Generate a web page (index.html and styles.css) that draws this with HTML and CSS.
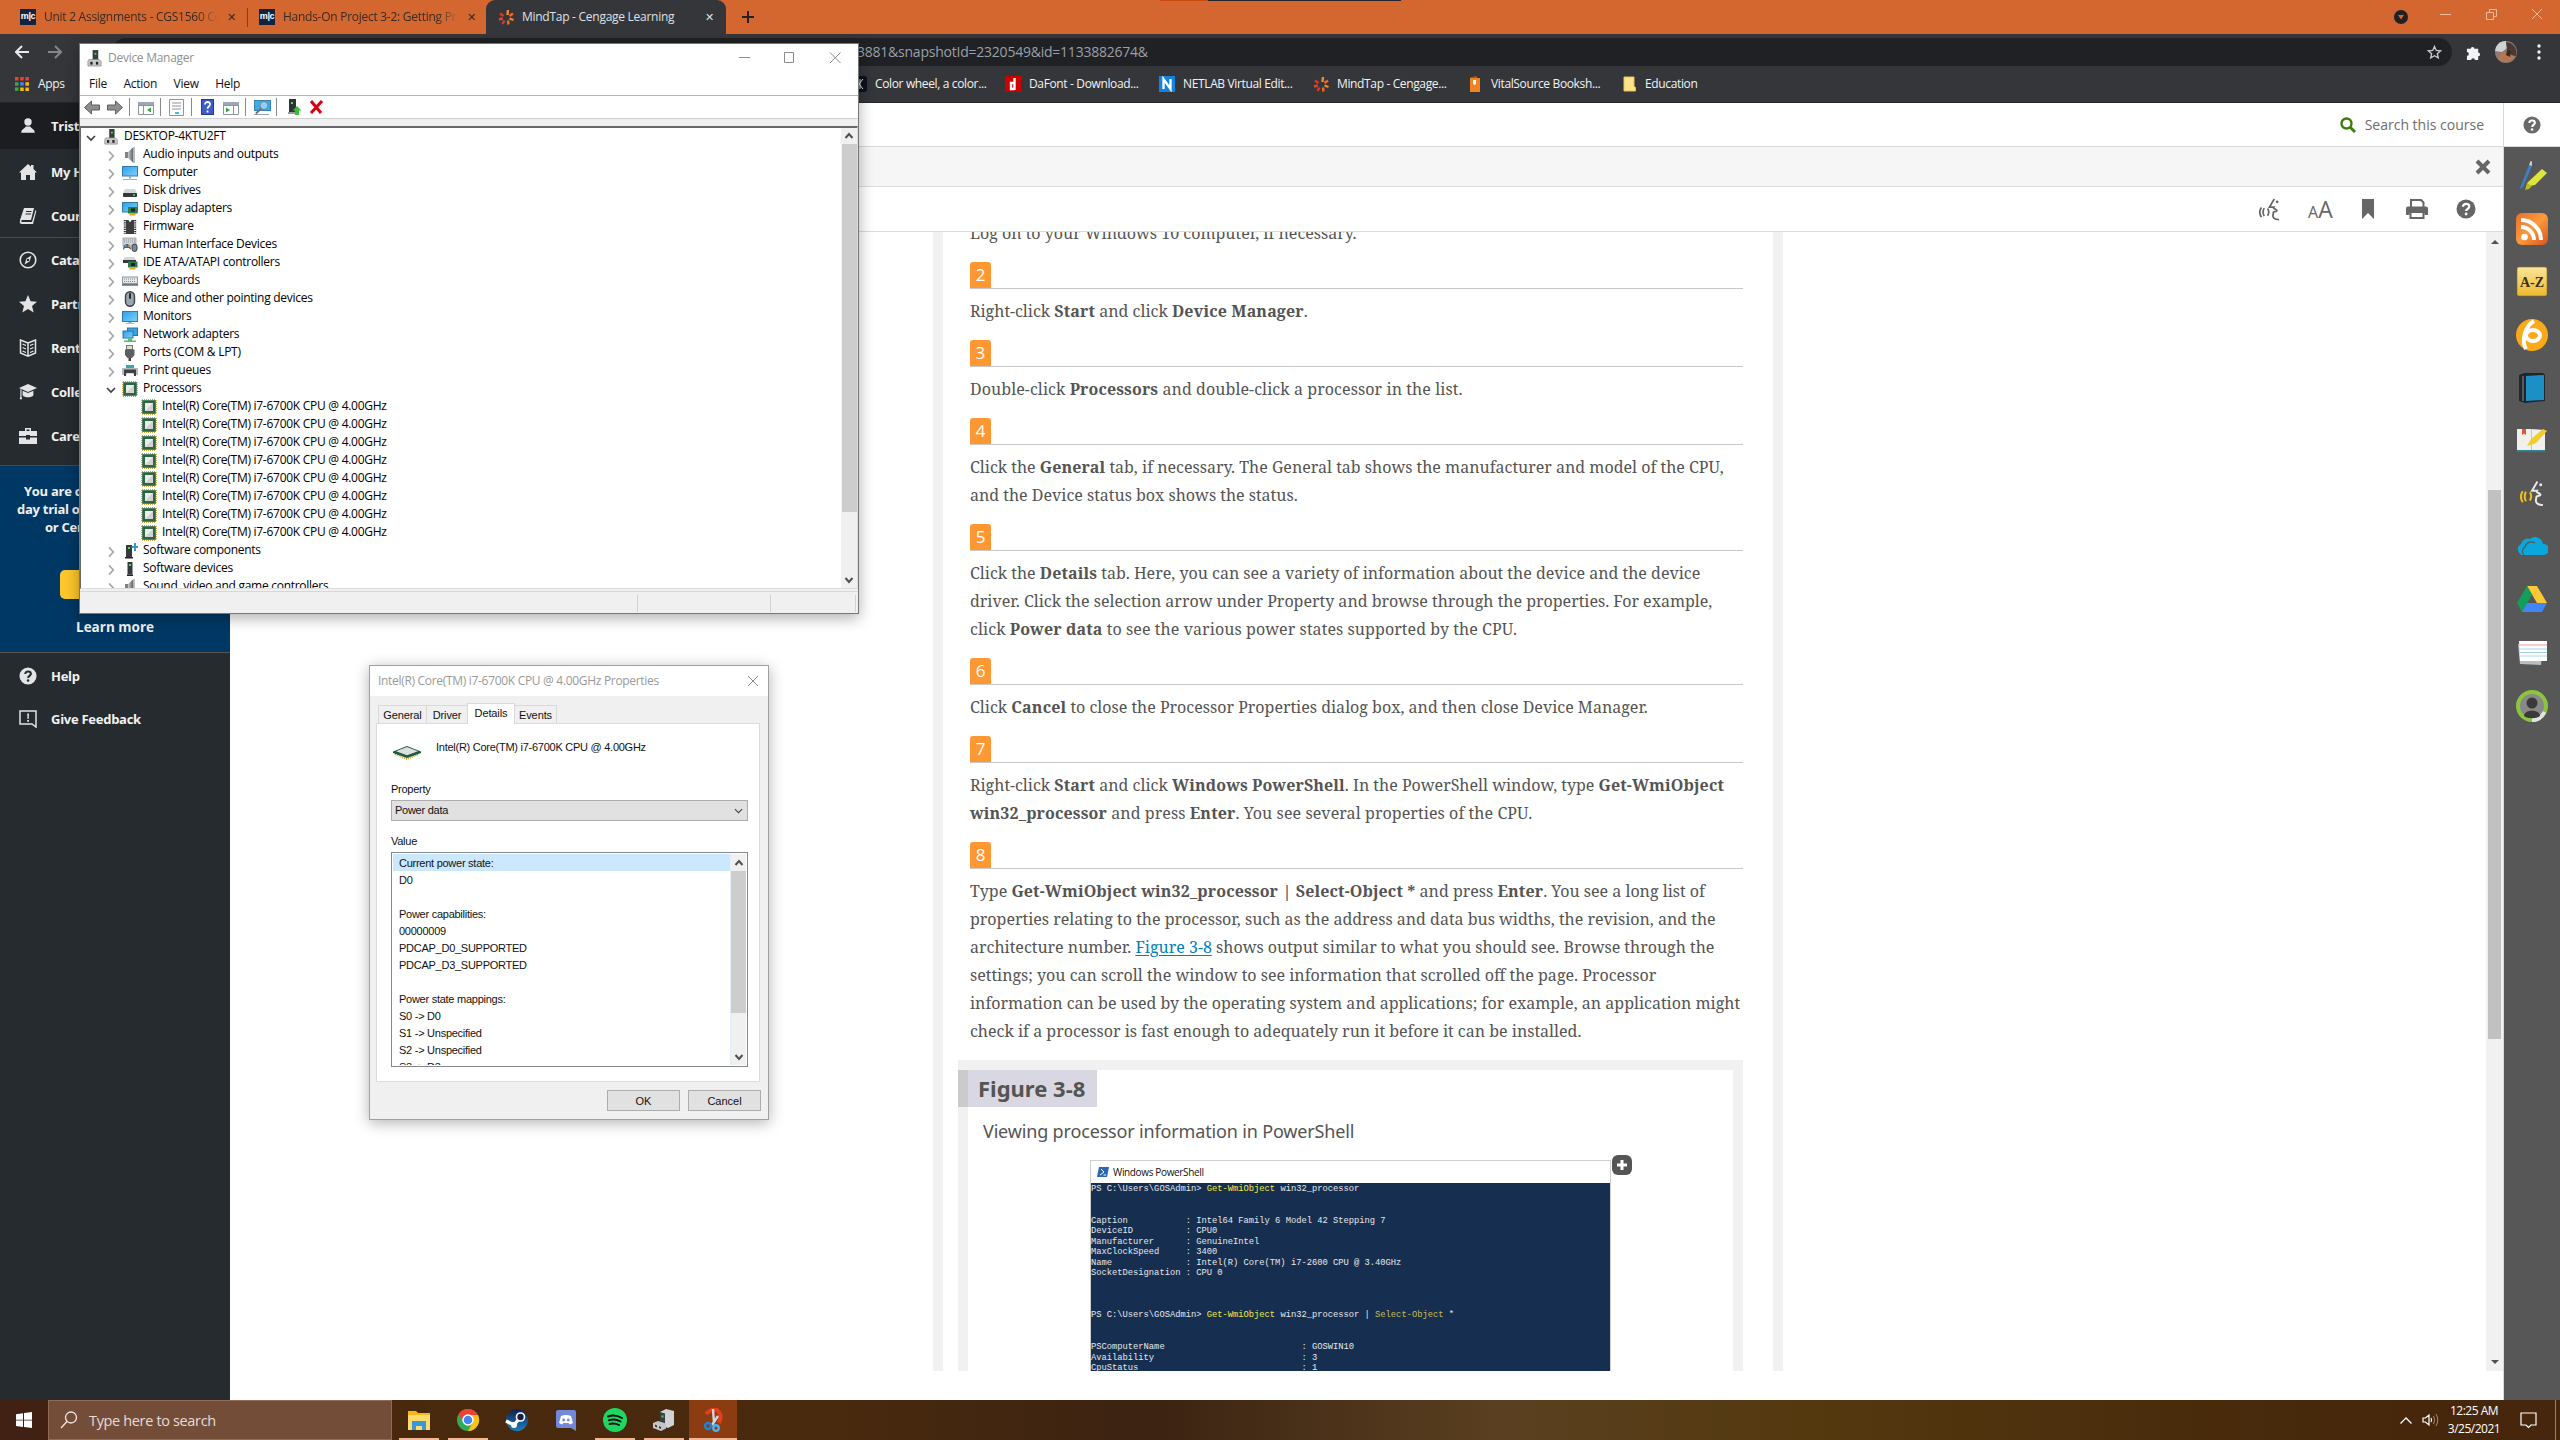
FILE: index.html
```html
<!DOCTYPE html>
<html lang="en">
<head>
<meta charset="utf-8">
<title>MindTap - Cengage Learning</title>
<link rel="stylesheet" href="styles.css">
</head>
<body>
<svg class="defs" aria-hidden="true">
  <defs>
    <linearGradient id="gScreen" x1="0" y1="0" x2="1" y2="1"><stop offset="0" stop-color="#2f9fe8"/><stop offset="1" stop-color="#7fd0ff"/></linearGradient>
    <linearGradient id="gGrey" x1="0" y1="0" x2="1" y2="0"><stop offset="0" stop-color="#c9ccd0"/><stop offset="1" stop-color="#5d6368"/></linearGradient>
    <linearGradient id="gRss" x1="0" y1="0" x2="1" y2="1"><stop offset="0" stop-color="#e8702a"/><stop offset=".5" stop-color="#fb9a3c"/><stop offset="1" stop-color="#d8521c"/></linearGradient>
    <linearGradient id="gAz" x1="0" y1="0" x2="0" y2="1"><stop offset="0" stop-color="#fbe59a"/><stop offset="1" stop-color="#ecb92c"/></linearGradient>
    <linearGradient id="gSteam" x1="0" y1="0" x2="0" y2="1"><stop offset="0" stop-color="#14204a"/><stop offset="1" stop-color="#1a7fc0"/></linearGradient>
    <symbol id="i-pc" viewBox="0 0 16 18"><rect x="6" y="0" width="6" height="11" fill="#3a3d40"/><rect x="8" y="3" width="2" height="2" fill="#3fe04c"/><path d="M2 10h11l2 2v5H1v-5z" fill="#c7c9cb" stroke="#85888b" stroke-width=".8"/><rect x="3.500" y="12.500" width="2.500" height="3" fill="#222"/><rect x="9.500" y="12.500" width="2.500" height="3" fill="#222"/></symbol>
    <symbol id="i-audio" viewBox="0 0 16 16"><path d="M3 5h3v6H3z" fill="#7c8286"/><path d="M6 5l5-4.500v15L6 11z" fill="url(#gGrey)"/><path d="M11.500 0h1v16h-1z" fill="#777"/></symbol>
    <symbol id="i-mon" viewBox="0 0 16 16"><rect x=".5" y="2.500" width="15" height="10" fill="url(#gScreen)" stroke="#2f7cae"/><path d="M6.500 13h3v1h-3zM4 14.200h8v.9H4z" fill="#8aa9bd"/></symbol>
    <symbol id="i-comp" viewBox="0 0 16 16"><rect x=".5" y="1.500" width="15" height="9.500" fill="url(#gScreen)" stroke="#2f7cae"/><path d="M7 11.500h2v2H7z" fill="#8aa9bd"/><path d="M1 14h14v1H1z" fill="#9fb4c3"/></symbol>
    <symbol id="i-disk" viewBox="0 0 16 16"><path d="M3 6h10l2 4H1z" fill="#d4d6d8"/><rect x="1" y="10" width="14" height="4" rx=".8" fill="#36393b"/><rect x="11" y="11.200" width="2" height="1.500" fill="#49e04f"/></symbol>
    <symbol id="i-disp" viewBox="0 0 16 16"><rect x=".5" y="1.500" width="15" height="9.500" fill="url(#gScreen)" stroke="#2f7cae"/><rect x="6" y="6" width="9.500" height="6.500" fill="#2f7b4c"/><rect x="9" y="7.500" width="4" height="3" fill="#123"/><path d="M7.500 12.500h6v2h-6z" fill="#e7a51d"/></symbol>
    <symbol id="i-chip" viewBox="0 0 16 16"><rect x="4" y="1" width="8" height="14" fill="#3c3d3f"/><path d="M2.800 1v14M13.200 1v14" stroke="#222" stroke-width="2" stroke-dasharray="1.200 1"/><circle cx="8" cy="1.500" r="1.300" fill="#fff"/></symbol>
    <symbol id="i-hid" viewBox="0 0 16 16"><rect x="1" y="1" width="13" height="8" fill="#d2d5d9" stroke="#8c9096" stroke-width=".7"/><path d="M2 3h11M2 5h11" stroke="#8c9096" stroke-dasharray="1 1"/><path d="M1 13c0-4 2-6 4-6s4 2 4 6l-2-2H3z" fill="#55606c"/><circle cx="4" cy="9" r="1" fill="#48a0e8"/><circle cx="7" cy="9" r="1" fill="#f0903c"/><rect x="10" y="7" width="5" height="7.500" rx="2.500" fill="#7d8894" stroke="#3a4048"/></symbol>
    <symbol id="i-ide" viewBox="0 0 16 16"><path d="M3 2h9l2 3H1z" fill="#d4d6d8"/><rect x="1" y="5" width="13" height="3" fill="#36393b"/><rect x="6" y="6.500" width="9.500" height="6" fill="#2f7b4c"/><rect x="9" y="8" width="4" height="3" fill="#123"/><path d="M7.500 12.500h6v2h-6z" fill="#e7a51d"/></symbol>
    <symbol id="i-kbd" viewBox="0 0 16 16"><rect x="0" y="3.500" width="16" height="9" fill="#8f959c"/><rect x="1" y="4.500" width="14" height="5.500" fill="#e6e9ec"/><path d="M2 6h12M2 8.500h12" stroke="#7d848b" stroke-dasharray="1 1"/><path d="M0 11.500h16v1H0z" fill="#565c63"/></symbol>
    <symbol id="i-mouse" viewBox="0 0 16 16"><rect x="3.500" y=".7" width="9" height="14.600" rx="4.500" fill="#9aa5b2" stroke="#3c4148" stroke-width="1.400"/><rect x="7" y="2" width="2" height="6" rx="1" fill="#2b2f35"/></symbol>
    <symbol id="i-net" viewBox="0 0 16 16"><rect x="5.500" y="1" width="10" height="7.500" fill="#39a3e8" stroke="#2c74a5"/><rect x="1" y="4" width="10" height="7" fill="url(#gScreen)" stroke="#2c74a5"/><path d="M6 11.500h4v2h4v1.500H2v-1.500h4z" fill="#4fc06a"/></symbol>
    <symbol id="i-port" viewBox="0 0 16 16"><rect x="4.500" y=".5" width="6" height="4" fill="#ddd" stroke="#777"/><path d="M3 4.500h9.500V10l-2.500 3H5.500L3 10z" fill="#5b5f63"/><path d="M6.500 13h2.500v3H6.500z" fill="#444"/></symbol>
    <symbol id="i-print" viewBox="0 0 16 16"><rect x="4" y="2" width="8" height="4" fill="#2ea0dc"/><path d="M5 3h3v2H5z" fill="#35b56a"/><rect x="0" y="5" width="16" height="7" fill="#b6b9bd"/><path d="M2 6.500h12V13h-2v-3H4v3H2z" fill="#3d4145"/><rect x="4.500" y="10.500" width="7" height="2.500" fill="#fff"/></symbol>
    <symbol id="i-cpu" viewBox="0 0 16 16"><path d="M1 .7h14M1 15.300h14M.7 1v14M15.300 1v14" stroke="#c9a748" stroke-width="1.200" stroke-dasharray="1 1"/><rect x="1.200" y="1.200" width="13.600" height="13.600" fill="#2d6547"/><rect x="4" y="4" width="8" height="8" fill="#d2d2d2"/><path d="M4 12V4h8z" fill="#ececec"/></symbol>
    <symbol id="i-swc" viewBox="0 0 16 16"><path d="M4 2h6v12H4z" fill="#36393b"/><path d="M3 14h8v1.500H3z" fill="#222"/><rect x="6" y="4" width="2" height="2" fill="#3fe04c"/><path d="M12 0h2v3h2v2h-2v3h-2V5H9.500V3H12z" fill="#3a96d8"/></symbol>
    <symbol id="i-swd" viewBox="0 0 16 16"><path d="M5.500 1h5v12.500h-5z" fill="#36393b"/><path d="M5 13.500h6V15H5z" fill="#222"/><rect x="7" y="3" width="2" height="2" fill="#3fe04c"/></symbol>
    <symbol id="i-ctree" viewBox="0 0 10 10"><path d="M3 .5L7.300 5 3 9.500" fill="none" stroke="#a6a6a6" stroke-width="1.700"/></symbol>
    <symbol id="i-ctreeo" viewBox="0 0 10 10"><path d="M1 3l4 4 4-4" fill="none" stroke="#404040" stroke-width="1.700"/></symbol>
    <symbol id="i-mt" viewBox="0 0 16 16"><g stroke-width="2.400"><path d="M10 1l-.5 5" stroke="#f58a2a"/><path d="M15 4.500l-3.500 2.500" stroke="#f06a25"/><path d="M15.500 11l-4-1.500" stroke="#f58a2a"/><path d="M10.500 15.500L10 11.500" stroke="#f06a25"/><path d="M4.500 15l2-3.500" stroke="#d93a2a"/><path d="M1 10.500l3.800-1" stroke="#e04a28"/><path d="M2 4.500l3.500 2.500" stroke="#d93a2a"/></g></symbol>
    <symbol id="i-q" viewBox="0 0 20 20"><circle cx="10" cy="10" r="9.500" fill="currentColor"/><path d="M7 7.800c0-4 6.200-3.600 6.200-.3 0 2.300-3.100 2.300-3.100 4.600" fill="none" stroke="var(--q,#fff)" stroke-width="2.300"/><circle cx="10.100" cy="15" r="1.400" fill="var(--q,#fff)"/></symbol>
    <symbol id="i-talk" viewBox="0 0 22 24"><path d="M16 1l-5 8.500h4.500c-1.500 2 4.500 2.500 3 4-1 1.500-4 0-3.500 2.500-1.500 4.500 1 6.500 6 6.500" fill="none" stroke="var(--face,#666)" stroke-width="1.800"/><circle cx="19" cy="4" r="1.400" fill="var(--face,#666)"/><path d="M9 11c1.500 2 1.500 5 0 7.500M5.500 10.500c-1.500 2.500-1.500 6 0 8.500M2.500 10c-2 3-2 7 0 10" fill="none" stroke="var(--wave,#666)" stroke-width="1.800"/></symbol>
  </defs>
</svg>

<div class="desktop">
  <header class="tabstrip">
    <div class="tab first"><span class="mc">m|c</span><span class="label">Unit 2 Assignments - CGS1560 Co</span><b class="x">✕</b></div>
    <div class="tab second"><span class="mc">m|c</span><span class="label">Hands-On Project 3-2: Getting Pr</span><b class="x">✕</b></div>
    <div class="tab active"><svg class="s16"><use href="#i-mt"/></svg><span class="label">MindTap - Cengage Learning</span><b class="x">✕</b></div>
    <svg class="plus" viewBox="0 0 12 12"><path d="M6 0v12M0 6h12" stroke="#202124" stroke-width="2"/></svg>
    <i class="strip-mark"></i>
    <div class="caption-buttons">
      <svg viewBox="0 0 14 14" width="14" height="14" class="drop"><circle cx="7" cy="7" r="7" fill="#202124"/><path d="M4 5h6l-3 4.500z" fill="#d3672f"/></svg>
      <svg viewBox="0 0 145 20" width="145" height="20"><g fill="none" stroke="#efb99b"><path d="M25 9.500h11"/><path d="M71.500 7.500h7v7h-7zM74.500 7V4.500h7v7H79"/><path d="M117 4l10 10M127 4l-10 10"/></g></svg>
    </div>
  </header>

  <div class="toolbar">
    <svg class="nav-arrows" viewBox="0 0 60 20"><g fill="none" stroke-width="2"><path d="M14 10H1M7 4l-6 6 6 6" stroke="#e8eaed"/><path d="M33 10h13M40 4l6 6-6 6" stroke="#84868a"/></g></svg>
    <div class="address"><span>3881&amp;snapshotId=2320549&amp;id=1133882674&amp;</span>
      <svg viewBox="0 0 16 16" width="15" height="15"><path d="M8 1.500l1.900 4.300 4.600.4-3.500 3.100 1.100 4.600L8 11.500l-4.100 2.400L5 9.300 1.500 6.200l4.600-.4z" fill="none" stroke="#c8cacd" stroke-width="1.400"/></svg></div>
    <svg class="puzzle" viewBox="0 0 16 16"><path d="M1 4h4a2 2 0 1 1 4 0h4v4a2 2 0 1 1 0 4v4H9.500a2 2 0 1 0-4 0H1v-4.500a2 2 0 1 0 0-4z" fill="#f1f3f4"/></svg>
    <svg class="avatar" viewBox="0 0 22 22"><circle cx="11" cy="11" r="11" fill="#8d7a72"/><path d="M1 6a11 11 0 0 1 10-6l1 7-5 4-7-1z" fill="#cfd3d8"/><path d="M11 1a11 11 0 0 1 10 14l-6-1-3-5z" fill="#4a3a35"/><path d="M3 18c2-6 6-9 9-7s6 3 7 6a11 11 0 0 1-15 2z" fill="#b27853"/><path d="M12 9l4 1-1 6-4-2z" fill="#3b2a25"/></svg>
    <svg class="dots" viewBox="0 0 4 16"><g fill="#f1f3f4"><circle cx="2" cy="2" r="1.700"/><circle cx="2" cy="8" r="1.700"/><circle cx="2" cy="14" r="1.700"/></g></svg>
  </div>

  <div class="bookmarks">
    <span class="bm apps"><svg viewBox="0 0 14 14" width="14" height="14"><g><path d="M0 0h3.500v3.500H0zM5.200 0h3.500v3.500H5.200zM10.400 0h3.500v3.500h-3.500z" fill="#ea4335"/><path d="M0 5.200h3.500v3.500H0z" fill="#34a853"/><path d="M5.200 5.200h3.500v3.500H5.200z" fill="#4285f4"/><path d="M10.400 5.200h3.500v3.500h-3.500z" fill="#fbbc04"/><path d="M0 10.400h3.500v3.500H0z" fill="#34a853"/><path d="M5.200 10.400h3.500v3.500H5.200zM10.400 10.400h3.500v3.500h-3.500z" fill="#fbbc04"/></g></svg>Apps</span>
    <span class="bm"><svg viewBox="0 0 16 16" width="16" height="16"><rect width="16" height="16" rx="3" fill="#0b1020"/><path d="M4 3l8 10M12 3L4 13M9 3v10" stroke="#ddd"/></svg>Color wheel, a color...</span>
    <span class="bm"><svg viewBox="0 0 16 16" width="16" height="16"><rect width="16" height="16" fill="#cd0000"/><path d="M9.500 2v12M9.500 7H6v6h3.500" stroke="#fff" stroke-width="2.400" fill="none"/></svg>DaFont - Download...</span>
    <span class="bm"><svg viewBox="0 0 16 16" width="16" height="16"><rect width="16" height="16" fill="#1283e0"/><path d="M4.500 13V3l7 10V3" fill="none" stroke="#fff" stroke-width="2.300"/></svg>NETLAB Virtual Edit...</span>
    <span class="bm"><svg class="s16"><use href="#i-mt"/></svg>MindTap - Cengage...</span>
    <span class="bm"><svg viewBox="0 0 16 16" width="16" height="16"><path d="M3 2l6-2 1 2h3v14H3z" fill="#f58220"/><path d="M3 2l6-2v2z" fill="#c8371c"/><path d="M6 4h3v4L7.500 9 6 8z" fill="#fff"/></svg>VitalSource Booksh...</span>
    <span class="bm"><svg viewBox="0 0 16 16" width="16" height="16"><path d="M3 1h10v9.500l1.500 1V15H3z" fill="#ffe38b" stroke="#e8c34e"/></svg>Education</span>
  </div>

  <main class="page">
    <nav class="side">
      <div class="side-item user"><svg viewBox="0 0 16 16"><circle cx="8" cy="4.500" r="3.300"/><path d="M2 14c0-3 3-3.500 4-5.500h4c1 2 4 2.500 4 5.500z"/></svg>Tristan</div>
      <div class="side-item"><svg viewBox="0 0 18 18"><path d="M9 1L0 9.500h2V17h5v-5h4v5h5V9.500h2L14.500 6V2H12v1.700z"/></svg>My Home</div>
      <div class="side-item courses"><svg viewBox="0 0 18 18"><path d="M5 1h10l-3 12H3c-1 0-1 2 0 2h10l3.500-12 .8 1L14 17H3c-3 0-2-3-2-4z"/><path d="M7 4.500h5.500M6.500 7H12" stroke="#252b2f"/></svg>Courses</div>
      <div class="side-item"><svg viewBox="0 0 18 18"><circle cx="9" cy="9" r="7.800" fill="none" stroke="#e4e4e4" stroke-width="1.600"/><path d="M12.500 4.500l-2 6-5 3 2-6z"/><circle cx="9" cy="9" r="1.200" fill="#252b2f"/></svg>Catalog</div>
      <div class="side-item"><svg viewBox="0 0 18 18"><path d="M9 0l2.600 6.200 6.400.5-5 4.200 1.700 6.600L9 14l-5.700 3.500L5 10.900 0 6.700l6.400-.5z"/></svg>Partner Offers</div>
      <div class="side-item"><svg viewBox="0 0 18 18"><path d="M9 4L1.500 1v13L9 17.200l7.500-3.200V1zM9 4v13" fill="none" stroke="#e4e4e4" stroke-width="1.500"/><path d="M3.500 5l3.500 1.500M3.500 8.500L7 10M3.500 12L7 13.500M14.500 5L11 6.500M14.500 8.500L11 10M14.500 12L11 13.500" stroke="#e4e4e4" stroke-width="1.300"/></svg>Rent</div>
      <div class="side-item"><svg viewBox="0 0 20 18"><path d="M0 4.500L10 0l10 4.500L10 9z"/><path d="M4 7.500l6 2.700 6-2.700v5c-2 3-10 3-12 0zM1.500 6h1.300v8l.7 3H.8l.7-3z"/></svg>College Success</div>
      <div class="side-item"><svg viewBox="0 0 18 18"><path d="M6 4V1h6v3h6v5h-7V8H7v1H0V4zm1.500 0h3V2.500h-3zM0 10.500h7v2h4v-2h7V17H0z"/></svg>Career Center</div>
      <section class="trial">
        <p class="l1">You are currently</p><p class="l2">day trial of Cen</p><p class="l3">or Cengage</p>
        <div class="trial-btn"></div>
        <a>Learn more</a>
      </section>
      <div class="side-item help"><svg viewBox="0 0 20 20" class="qd"><use href="#i-q"/></svg>Help</div>
      <div class="side-item"><svg viewBox="0 0 18 18"><path d="M1 1h16v16l-4-3H1z" fill="none" stroke="#e4e4e4" stroke-width="1.500"/><path d="M8.200 3.500h1.800l-.3 5.500H8.500zM8.200 10h1.800v1.700H8.200z"/></svg>Give Feedback</div>
    </nav>

    <div class="content">
      <div class="coursebar">
        <svg viewBox="0 0 16 16" width="16" height="16"><circle cx="6.500" cy="6.500" r="5" fill="none" stroke="#3a7f0e" stroke-width="2.400"/><path d="M10 10l5 5" stroke="#3a7f0e" stroke-width="2.800"/></svg>
        <span>Search this course</span>
        <div class="qbox"><svg width="18" height="18" viewBox="0 0 20 20"><use href="#i-q"/></svg></div>
      </div>
      <div class="below">
        <div class="reader">
          <div class="closebar"><svg viewBox="0 0 16 16" width="16" height="16"><path d="M2 2l12 12M14 2L2 14" stroke="#666" stroke-width="4"/></svg></div>
          <div class="tools">
            <svg width="21" height="23"><use href="#i-talk"/></svg>
            <span class="aa"><small>A</small>A</span>
            <svg class="mark" viewBox="0 0 12 20" width="12" height="20"><path d="M0 0h12v20l-6-6-6 6z" fill="#666"/></svg>
            <svg viewBox="0 0 22 20" width="22" height="20"><path d="M5 8V1h10l2.500 2.500V8" fill="none" stroke="#666" stroke-width="2"/><path d="M2 7.500h18q2 0 2 2V16h-3.500v-2h-15v2H0V9.500q0-2 2-2z" fill="#666"/><path d="M4.500 13.500v5.500h13v-5.500" fill="none" stroke="#666" stroke-width="2"/></svg>
            <svg viewBox="0 0 20 20" width="20" height="20"><use href="#i-q"/></svg>
          </div>
          <div class="scrollpane">
            <article class="article">
              <div class="step"><b class="num">1</b><p>Log on to your Windows 10 computer, if necessary.</p></div>
              <div class="step"><b class="num">2</b><p>Right-click <b>Start</b> and click <b>Device Manager</b>.</p></div>
              <div class="step loose"><b class="num">3</b><p>Double-click <b>Processors</b> and double-click a processor in the list.</p></div>
              <div class="step"><b class="num">4</b><p>Click the <b>General</b> tab, if necessary. The General tab shows the manufacturer and model of the CPU,<br>and the Device status box shows the status.</p></div>
              <div class="step"><b class="num">5</b><p>Click the <b>Details</b> tab. Here, you can see a variety of information about the device and the device<br>driver. Click the selection arrow under Property and browse through the properties. For example,<br><span class="loose">click <b>Power data</b> to see the various power states supported by the CPU.</span></p></div>
              <div class="step"><b class="num">6</b><p>Click <b>Cancel</b> to close the Processor Properties dialog box, and then close Device Manager.</p></div>
              <div class="step"><b class="num">7</b><p>Right-click <b>Start</b> and click <b>Windows PowerShell</b>. In the PowerShell window, type <b>Get-WmiObject<br>win32_processor</b><span class="loose"> and press <b>Enter</b>. You see several properties of the CPU.</span></p></div>
              <div class="step"><b class="num">8</b><p>Type <b>Get-WmiObject win32_processor | Select-Object *</b> and press <b>Enter</b>. You see a long list of<br>properties relating to the processor, such as the address and data bus widths, the revision, and the<br>architecture number. <a>Figure 3-8</a> shows output similar to what you should see. Browse through the<br>settings; you can scroll the window to see information that scrolled off the page. Processor<br>information can be used by the operating system and applications; for example, an application might<br>check if a processor is fast enough to adequately run it before it can be installed.</p></div>
              <figure class="figure">
                <h3>Figure 3-8</h3>
                <figcaption>Viewing processor information in PowerShell</figcaption>
                <div class="shot">
                  <div class="ps">
                    <div class="ps-title"><svg viewBox="0 0 12 10" width="12" height="10"><path d="M2 0h10l-2 10H0z" fill="#2a66b4"/><path d="M4 2l3 3-4 3M6.500 8H9" stroke="#fff" fill="none"/></svg>Windows PowerShell</div>
<pre>PS C:\Users\GOSAdmin&gt; <em>Get-WmiObject</em> win32_processor


Caption           : Intel64 Family 6 Model 42 Stepping 7
DeviceID          : CPU0
Manufacturer      : GenuineIntel
MaxClockSpeed     : 3400
Name              : Intel(R) Core(TM) i7-2600 CPU @ 3.40GHz
SocketDesignation : CPU 0



PS C:\Users\GOSAdmin&gt; <em>Get-WmiObject</em> win32_processor | <em class="dim">Select-Object</em> *


PSComputerName                          : GOSWIN10
Availability                            : 3
CpuStatus                               : 1</pre>
                  </div>
                  <svg class="expand" viewBox="0 0 20 20"><rect width="20" height="20" rx="6" fill="#555"/><path d="M10 5v10M5 10h10" stroke="#fff" stroke-width="3"/></svg>
                </div>
              </figure>
            </article>
            <div class="scrollbar"><svg viewBox="0 0 8 4" width="8" height="4"><path d="M0 4l4-4 4 4z" fill="#505050"/></svg><i></i><svg viewBox="0 0 8 4" width="8" height="4"><path d="M0 0h8L4 4z" fill="#505050"/></svg></div>
          </div>
        </div>
        <aside class="rail">
          <svg viewBox="0 0 32 32"><path d="M4 28L13 5l3 1L7 27l-3 2z" fill="#3f7fc4"/><path d="M13 5l1.500-4 1.500.5L16 6z" fill="#ccc"/><path d="M11 23L26 9l5 4-12 12-6 1z" fill="#dbe63c"/><path d="M11 23l5 3-3 3-4 1z" fill="#b7bd22"/></svg>
          <svg viewBox="0 0 32 32"><rect width="32" height="32" rx="6" fill="url(#gRss)"/><circle cx="8.500" cy="24" r="3.300" fill="#fff"/><path d="M5 14a13 13 0 0 1 13 13M5 7a20 20 0 0 1 20 20" fill="none" stroke="#fff" stroke-width="4"/></svg>
          <svg viewBox="0 0 32 32"><rect x="1" y="1" width="30" height="29" rx="2" fill="url(#gAz)" stroke="#8a6a14" stroke-width=".6"/><text x="16" y="20.500" text-anchor="middle" class="az">A-Z</text></svg>
          <svg viewBox="0 0 32 32"><circle cx="16" cy="16" r="16" fill="#fba919"/><path d="M10 30C5 22 9 7 18 2" fill="none" stroke="#fff" stroke-width="4"/><ellipse cx="17" cy="16.500" rx="7" ry="5.500" fill="none" stroke="#fff" stroke-width="4"/></svg>
          <svg viewBox="0 0 32 32"><path d="M3 3l5-2h19l2 2v26L9 31l-6-2z" fill="#20262b"/><path d="M10 4l18-1v25l-18 1z" fill="#1c8fc4"/><path d="M6 4l2 0v25H6z" fill="#55585b"/></svg>
          <svg viewBox="0 0 32 32"><path d="M1 5h28v22H1z" fill="#2e7f94"/><path d="M1 4h14l14 1v20H1z" fill="#f0f1ec"/><path d="M15 4h.8v21H15z" fill="#bbb"/><path d="M6 4h4v6l-2-1.500L6 10z" fill="#e2562c"/><path d="M11 21l4-7L27 4l4 2-11 12-5 2z" fill="#f0cd2d"/></svg>
          <svg class="voice" viewBox="0 0 32 32"><use href="#i-talk" x="4" y="2" width="24" height="27"/></svg>
          <svg viewBox="0 0 32 32"><path d="M6 24a6 6 0 0 1-1-11 7 7 0 0 1 9-5 8 8 0 0 1 13 5 5.500 5.500 0 0 1 1 11z" fill="#0aa7dd"/><path d="M8 24a5 5 0 0 1 1-8 6.500 6.500 0 0 1 10-4" fill="none" stroke="#575757" stroke-width="1.200"/></svg>
          <svg viewBox="0 0 32 32"><path d="M11 2h10l10 17H21z" fill="#fcc934"/><path d="M11 2l5 8.500L6 28 1 19z" fill="#11a05a"/><path d="M11 19h20l-5 9H6z" fill="#4285f4"/></svg>
          <svg viewBox="0 0 32 32"><path d="M2 7l25 2-2 19-21-1z" fill="#bdbdbd"/><path d="M3 4h28v20H4z" fill="#fff"/><path d="M3 8h28" stroke="#f29a9a"/><path d="M3 12h28M3 15.500h28M4 19h27" stroke="#a7d4ee"/></svg>
          <svg viewBox="0 0 32 32"><circle cx="16" cy="16" r="14" fill="#888" stroke="#8bc53f" stroke-width="4"/><path d="M16 30a14 14 0 0 0 12.500-8" fill="none" stroke="#e2e2e2" stroke-width="4"/><circle cx="16" cy="13" r="5.500" fill="#3a3a3a"/><path d="M8 26c0-7 16-7 16 0-4 3-12 3-16 0z" fill="#3a3a3a"/></svg>
        </aside>
      </div>
    </div>
  </main>

  <footer class="taskbar">
    <div class="start"><svg viewBox="0 0 16 16" width="16" height="16"><path d="M0 2.200l7-1v6.500H0zM8 1l8-1v7.700H8zM0 8.500h7V15l-7-1zM8 8.500h8V16l-8-1z" fill="#fff"/></svg></div>
    <div class="search"><svg viewBox="0 0 18 18" width="18" height="18"><circle cx="11" cy="6.500" r="5.500" fill="none" stroke="#f0e8e4" stroke-width="1.300"/><path d="M7 10.500L1 17" stroke="#f0e8e4" stroke-width="1.300"/></svg><span>Type here to search</span></div>
    <div class="apps-row">
      <span class="app open"><svg viewBox="0 0 24 24"><path d="M1 3h8l2 2h12v17H1z" fill="#f5b818"/><path d="M1 7h22v15H1z" fill="#ffdb6b"/><path d="M5 13h14v9h-4v-4H9v4H5z" fill="#3b97dd"/></svg></span>
      <span class="app open"><svg viewBox="0 0 24 24"><circle cx="12" cy="12" r="11" fill="#34a853"/><path d="M12 12L2.500 6.500A11 11 0 0 1 21.500 6.500z" fill="#ea4335"/><path d="M12 7h10a11 11 0 0 1-10 16l5-9z" fill="#fbc116"/><path d="M2.500 6.500A11 11 0 0 1 12 1l9.500 6H12L8 14z" fill="#ea4335"/><circle cx="12" cy="12" r="5" fill="#4285f4" stroke="#fff" stroke-width="1.500"/></svg></span>
      <span class="app"><svg viewBox="0 0 24 24"><circle cx="12" cy="12" r="11" fill="url(#gSteam)"/><path d="M1 13l8 4 5-6" stroke="#fff" stroke-width="3.400" fill="none"/><circle cx="15.500" cy="9" r="4" fill="#14204a" stroke="#fff" stroke-width="1.600"/><circle cx="9" cy="17" r="3" fill="#fff"/></svg></span>
      <span class="app"><svg viewBox="0 0 24 24"><path d="M4 2h16q2 0 2 2v19l-5-3H4q-2 0-2-2V4q0-2 2-2z" fill="#7289da"/><path d="M7 8q5-2 10 0l2 7-3 1.500-1.500-1.500h-5L8 16.500 5 15z" fill="#fff"/><circle cx="9.700" cy="12" r="1.400" fill="#7289da"/><circle cx="14.300" cy="12" r="1.400" fill="#7289da"/></svg></span>
      <span class="app open"><svg viewBox="0 0 24 24"><circle cx="12" cy="12" r="12" fill="#1ed760"/><path d="M5 8.500q7-2.500 14 1.500M6 12.300q6-2 11.500 1.200M6.500 16q5-1.500 9.500 1" stroke="#111" stroke-width="2" fill="none" stroke-linecap="round"/></svg></span>
      <span class="app open"><svg viewBox="0 0 24 24"><path d="M8 4l6-3 8 2v14l-6 3-8-3z" fill="#d0d2d4"/><path d="M8 4l5 1.500V18l-5-2z" fill="#3b3e41"/><rect x="9.500" y="7.500" width="2" height="2" fill="#41dc4a"/><path d="M1 15l5-2 8 2.500v5L9 23l-8-3z" fill="#c3c5c7"/><path d="M3 16.500l2 1v2l-2-1zM7 18l2 1v2l-2-1z" fill="#333"/></svg></span>
      <span class="app open current"><svg viewBox="0 0 24 24"><path d="M5 6q6-6 11-4 6 5 2 13" fill="none" stroke="#e0401c" stroke-width="4"/><path d="M12 1l1 14M17 8l-6 9" stroke="#d5d8da" stroke-width="2.400"/><circle cx="7" cy="18" r="3" fill="none" stroke="#1f82d2" stroke-width="2.400"/><circle cx="15" cy="20" r="2.700" fill="none" stroke="#4fb0ee" stroke-width="2.400"/></svg></span>
    </div>
    <div class="tray">
      <svg viewBox="0 0 12 7" width="12" height="7"><path d="M.5 6.500L6 1l5.500 5.500" fill="none" stroke="#fff" stroke-width="1.300"/></svg>
      <svg class="spk" viewBox="0 0 17 14" width="17" height="14"><path d="M1 5h2.500L7 2v10L3.500 9H1zM9 5q1.200 2 0 4" fill="none" stroke="#fff" stroke-width="1.200"/><path d="M11.500 3q2.500 4 0 8M14 1q3.500 6 0 12" fill="none" stroke="#a08a7a"/></svg>
      <div class="clock"><span>12:25 AM</span><span>3/25/2021</span></div>
      <svg class="note" viewBox="0 0 17 17" width="17" height="17"><path d="M1 1h15v12h-5l-2.500 2.500L6 13H1z" fill="none" stroke="#fff" stroke-width="1.200"/></svg>
      <i class="peek"></i>
    </div>
  </footer>

  <section class="window devmgr">
    <div class="win-title"><svg width="15" height="17"><use href="#i-pc"/></svg><span>Device Manager</span>
      <svg class="win-btns" viewBox="0 0 110 20" width="110" height="20"><g fill="none" stroke="#8a8a8a"><path d="M4 9.500h11"/><path d="M49.500 4.500h9v10h-9z"/><path d="M95 4.500l10.500 10.500M105.500 4.500L95 15"/></g></svg></div>
    <div class="menu"><span>File</span><span>Action</span><span>View</span><span>Help</span></div>
    <svg class="wtools" viewBox="0 0 780 22" width="780" height="22">
      <g fill="#8e8e8e" stroke="#5c5c5c"><path d="M4.500 11.500l7-6.500v4h8v5h-8v4z"/><path d="M42.500 11.500l-7-6.500v4h-8v5h8v4z"/></g>
      <path d="M49.500 2v18M80.500 2v18M111.500 2v18M165.500 2v18M196.500 2v18" stroke="#8a8a8a"/>
      <g fill="#fff" stroke="#8a95a1"><path d="M58.500 6.500h15v12h-15zM58.500 9.500h15M63.500 10v8.500"/><path d="M89.500 3.500h14v16h-14zM92 7h9M92 10h9M92 13h9"/><path d="M143.500 6.500h15v12h-15zM143.500 9.500h15M153.500 10v8.500"/></g>
      <path d="M58 6h16v3H58zM143 6h16v3h-16z" fill="#9ea8b3"/>
      <path d="M71 11.500v5l-4-2.500zM146 11.500v5l4-2.500z" fill="#3aa53a"/><path d="M95 16h4v2h-4z" fill="#3cc0e8"/>
      <rect x="121.500" y="3.500" width="12" height="15" fill="#3d5ccc" stroke="#26398c"/><path d="M125 8.500c0-3.500 5.500-3.200 5 0-.2 2-2.500 2-2.500 4.200M127.500 14.500v2" stroke="#fff" stroke-width="1.800" fill="none"/>
      <rect x="174.500" y="4.500" width="16" height="10" fill="#3fa9ec" stroke="#3582b3"/><path d="M174 18.500h15" stroke="#8aa2b2"/><circle cx="184" cy="9.500" r="4" fill="#8fd0f6" stroke="#6d8496"/><path d="M181 12.500l-5 5" stroke="#6d7378" stroke-width="2"/>
      <path d="M209 3h7v13h-7z" fill="#303335"/><path d="M208 16h10v2h-10z" fill="#999"/><path d="M211 6h2v2h-2z" fill="#4be04f"/><path d="M217 10l4.500 4.500H219V19h-4v-4.500h-2.500z" fill="#36c03a"/>
      <path d="M231 5l10 12M242 5l-11 12" stroke="#d8000c" stroke-width="3"/>
    </svg>
    <div class="strip"></div>
    <div class="tree-wrap">
      <ul class="tree">
        <li class="root"><svg class="c"><use href="#i-ctreeo"/></svg><svg><use href="#i-pc"/></svg>DESKTOP-4KTU2FT</li>
        <li><svg class="c"><use href="#i-ctree"/></svg><svg><use href="#i-audio"/></svg>Audio inputs and outputs</li>
        <li><svg class="c"><use href="#i-ctree"/></svg><svg><use href="#i-comp"/></svg>Computer</li>
        <li><svg class="c"><use href="#i-ctree"/></svg><svg><use href="#i-disk"/></svg>Disk drives</li>
        <li><svg class="c"><use href="#i-ctree"/></svg><svg><use href="#i-disp"/></svg>Display adapters</li>
        <li><svg class="c"><use href="#i-ctree"/></svg><svg><use href="#i-chip"/></svg>Firmware</li>
        <li><svg class="c"><use href="#i-ctree"/></svg><svg><use href="#i-hid"/></svg>Human Interface Devices</li>
        <li><svg class="c"><use href="#i-ctree"/></svg><svg><use href="#i-ide"/></svg>IDE ATA/ATAPI controllers</li>
        <li><svg class="c"><use href="#i-ctree"/></svg><svg><use href="#i-kbd"/></svg>Keyboards</li>
        <li><svg class="c"><use href="#i-ctree"/></svg><svg><use href="#i-mouse"/></svg>Mice and other pointing devices</li>
        <li><svg class="c"><use href="#i-ctree"/></svg><svg><use href="#i-mon"/></svg>Monitors</li>
        <li><svg class="c"><use href="#i-ctree"/></svg><svg><use href="#i-net"/></svg>Network adapters</li>
        <li><svg class="c"><use href="#i-ctree"/></svg><svg><use href="#i-port"/></svg>Ports (COM &amp; LPT)</li>
        <li><svg class="c"><use href="#i-ctree"/></svg><svg><use href="#i-print"/></svg>Print queues</li>
        <li><svg class="c"><use href="#i-ctreeo"/></svg><svg><use href="#i-cpu"/></svg>Processors</li>
        <li class="leaf"><svg><use href="#i-cpu"/></svg>Intel(R) Core(TM) i7-6700K CPU @ 4.00GHz</li>
        <li class="leaf"><svg><use href="#i-cpu"/></svg>Intel(R) Core(TM) i7-6700K CPU @ 4.00GHz</li>
        <li class="leaf"><svg><use href="#i-cpu"/></svg>Intel(R) Core(TM) i7-6700K CPU @ 4.00GHz</li>
        <li class="leaf"><svg><use href="#i-cpu"/></svg>Intel(R) Core(TM) i7-6700K CPU @ 4.00GHz</li>
        <li class="leaf"><svg><use href="#i-cpu"/></svg>Intel(R) Core(TM) i7-6700K CPU @ 4.00GHz</li>
        <li class="leaf"><svg><use href="#i-cpu"/></svg>Intel(R) Core(TM) i7-6700K CPU @ 4.00GHz</li>
        <li class="leaf"><svg><use href="#i-cpu"/></svg>Intel(R) Core(TM) i7-6700K CPU @ 4.00GHz</li>
        <li class="leaf"><svg><use href="#i-cpu"/></svg>Intel(R) Core(TM) i7-6700K CPU @ 4.00GHz</li>
        <li><svg class="c"><use href="#i-ctree"/></svg><svg><use href="#i-swc"/></svg>Software components</li>
        <li><svg class="c"><use href="#i-ctree"/></svg><svg><use href="#i-swd"/></svg>Software devices</li>
        <li><svg class="c"><use href="#i-ctree"/></svg><svg><use href="#i-audio"/></svg>Sound, video and game controllers</li>
      </ul>
      <div class="wscroll"><svg viewBox="0 0 10 8"><path d="M1.500 6L5 2l3.500 4" fill="none" stroke="#505050" stroke-width="2"/></svg><i></i><svg viewBox="0 0 10 8"><path d="M1.500 2L5 6l3.500-4" fill="none" stroke="#505050" stroke-width="2"/></svg></div>
    </div>
    <div class="status"><i></i><i></i><i></i></div>
  </section>

  <section class="window dialog">
    <div class="dlg-title"><span>Intel(R) Core(TM) i7-6700K CPU @ 4.00GHz Properties</span><svg viewBox="0 0 12 12" width="12" height="12"><path d="M1 1l10 10M11 1L1 11" stroke="#8a8a8a" fill="none"/></svg></div>
    <div class="dlg-tabs"><span class="g">General</span><span class="d">Driver</span><span class="on">Details</span><span class="e">Events</span></div>
    <div class="panel">
      <div class="dev"><svg viewBox="0 0 28 14" width="28" height="14"><path d="M2 8l12 5 12-5" stroke="#c39a35" stroke-width="2" stroke-dasharray="1 1" fill="none"/><path d="M0 5.500L14 0l14 5.500V7l-14 5L0 7z" fill="#1e5b3c"/><path d="M3 5.200L14 1l11 4.200-11 4z" fill="#dedede"/></svg><span>Intel(R) Core(TM) i7-6700K CPU @ 4.00GHz</span></div>
      <label>Property</label>
      <div class="select">Power data<svg viewBox="0 0 10 6" width="9" height="6"><path d="M1 .8l4 4 4-4" fill="none" stroke="#444" stroke-width="1.200"/></svg></div>
      <label>Value</label>
      <div class="list">
        <ul><li class="sel">Current power state:</li><li>D0</li><li></li><li>Power capabilities:</li><li>00000009</li><li>PDCAP_D0_SUPPORTED</li><li>PDCAP_D3_SUPPORTED</li><li></li><li>Power state mappings:</li><li>S0 -&gt; D0</li><li>S1 -&gt; Unspecified</li><li>S2 -&gt; Unspecified</li><li>S3 -&gt; D3</li></ul>
        <div class="wscroll"><svg viewBox="0 0 10 8"><path d="M1.500 6L5 2l3.500 4" fill="none" stroke="#505050" stroke-width="2"/></svg><i></i><svg viewBox="0 0 10 8"><path d="M1.500 2L5 6l3.500-4" fill="none" stroke="#505050" stroke-width="2"/></svg></div>
      </div>
    </div>
    <div class="dlg-btns"><span>OK</span><span>Cancel</span></div>
  </section>
</div>
</body>
</html>
```
FILE: styles.css
```css
*{box-sizing:border-box}
body{margin:0;background:#fff;overflow:hidden}
ul,p,h3,figure,pre{margin:0;padding:0}
ul{list-style:none}
svg{display:block;flex:none}
.defs{position:absolute;width:0;height:0}
.s16{width:16px;height:16px}
.desktop{position:relative;width:2560px;height:1440px;display:flex;flex-direction:column;overflow:hidden;font:12px/16px "Open Sans","Noto Sans",sans-serif;letter-spacing:-.27px;white-space:nowrap}

/* browser chrome */
.tabstrip{height:34px;background:#d3672f;display:flex;align-items:flex-start;position:relative}
.tab{height:34px;display:flex;align-items:center;color:#3b2a22}
.tab .label{flex:1;overflow:hidden;margin-left:8px}
.tab .x{font:bold 11px "DejaVu Sans",sans-serif;letter-spacing:0;width:10px;flex:none}
.first{width:247px;padding:0 10px 0 20px;position:relative}
.first::after{content:"";position:absolute;right:-1px;top:8px;height:19px;width:1px;background:#7b4226}
.second{width:239px;padding:0 9px 0 12px}
.first .label,.second .label{-webkit-mask-image:linear-gradient(90deg,#000 88%,transparent);margin-right:9px}
.tab.active{width:240px;background:#35363a;color:#dfe1e5;border-radius:9px 9px 0 0;padding:0 11px 0 12px}
.mc{width:16px;height:16px;background:#10243f;color:#fff;font:bold 9px/15px "Liberation Sans",sans-serif;text-align:center;letter-spacing:-.4px;flex:none}
.plus{width:12px;height:12px;margin:11px 0 0 16px}
.strip-mark{position:absolute;left:1160px;top:0;width:241px;height:1px;background:linear-gradient(90deg,#c94b0c 48px,#26262a 48px)}
.caption-buttons{margin-left:auto;display:flex;padding-top:5px}
.drop{margin:5px 7px 0 0}
.toolbar{height:36px;background:#35363a;display:flex;align-items:center}
.nav-arrows{width:60px;height:20px;margin-left:15px}
.address{margin-left:37px;width:2340px;height:28px;border-radius:14px;background:#202124;display:flex;align-items:center;justify-content:space-between;padding:0 10px 0 745px;font-size:14px;letter-spacing:-.23px;color:#9aa0a6}
.puzzle{width:15px;height:15px;margin-left:14px}
.avatar{width:22px;height:22px;margin-left:14px}
.dots{width:4px;height:16px;margin-left:20px}
.bookmarks{height:33px;background:#35363a;border-bottom:1px solid #252629;display:flex;position:relative;color:#f1f3f4;letter-spacing:-.36px}
.bm{display:flex;align-items:center;gap:8px;height:28px;width:154px;flex:none}
.apps{width:851px;padding-left:15px;gap:9px}

/* page */
.page{height:1297px;display:flex;background:#fff}
.side{width:230px;background:#252b2f;color:#f2f2f2;font-weight:700;font-size:13px;display:flex;flex-direction:column;flex:none;padding-bottom:0}
.side-item{height:44px;display:flex;align-items:center;gap:14px;padding-left:19px;flex:none}
.side-item svg{width:18px;height:18px;fill:#e4e4e4;color:#e4e4e4}
.qd{--q:#252b2f}
.user{height:46px;background:#1b1d20;margin-bottom:1px}
.courses{height:44px;border-bottom:1px solid #474d51}
.trial{height:188px;margin-top:7px;background:#003865;border-top:1px solid #3b4a58;border-bottom:1px solid #56534f;padding-top:16px;line-height:18px;flex:none}
.l1{padding-left:24px}.l2{padding-left:17px}.l3{padding-left:45px}
.trial-btn{width:110px;height:29px;margin:34px 0 0 60px;background:#ffc72c;border-radius:5px}
.trial a{display:block;text-align:center;margin-top:19px;font-size:13.500px;letter-spacing:0}
.help{margin-top:1px;height:43px}
.content{flex:1;display:flex;flex-direction:column}
.coursebar{height:44px;border-bottom:1px solid #d9d9d9;display:flex;align-items:center;justify-content:flex-end;font-size:14px;letter-spacing:0;color:#6d6d6d}
.coursebar>svg{margin-right:9px}
.coursebar span{padding-top:1px}
.qbox{width:57px;height:43px;margin-left:19px;border-left:1px solid #d9d9d9;display:flex;align-items:center;justify-content:center;color:#6a6a6a}
.below{flex:1;display:flex}
.reader{flex:1;border-right:1px solid #d9d9d9;color:#666;display:flex;flex-direction:column}
.closebar{height:40px;background:#f6f6f6;border-bottom:1px solid #dcdcdc;display:flex;align-items:center;justify-content:flex-end;padding-right:12px}
.tools{height:45px;border-bottom:1px solid #dcdcdc;display:flex;align-items:center;justify-content:flex-end;gap:28px;padding-right:27px}
.aa{width:26px;font:23px/24px "Open Sans",sans-serif;letter-spacing:0;padding-top:2px}
.aa small{font-size:16px}
.mark{margin-right:4px}
.scrollpane{height:1139px;display:flex;justify-content:flex-end;overflow:hidden}
.article{width:850px;height:1139px;overflow:hidden;margin-right:703px;border:solid #f1f1f1;border-width:0 10px;padding:0 30px 0 27px;display:flex;flex-direction:column}
.article{color:#545454;font:16px/28px "Noto Serif",serif;letter-spacing:0}
.article>:first-child{margin-top:-48px}
.step{flex:none;display:flex;flex-direction:column;margin-bottom:15px}
.step p b{letter-spacing:.12px}
.loose{letter-spacing:.08px}
.num{width:21px;height:26px;border-radius:3px 3px 0 0;background:#ff9833;color:#fff;font:17px/26px "Open Sans","Noto Sans",sans-serif;text-align:center}
.step p{border-top:1px solid #c8c8c8;padding-top:8px}
.step a{color:#007fb8;text-decoration:underline;text-underline-offset:2px}
.figure{flex:none;width:785px;height:420px;margin-left:-12px;border:10px solid #f1f1f1;margin-right:-8px}
.figure h3{width:139px;height:37px;margin-left:-10px;border-left:10px solid #cbcbcb;background:#d9d8e2;padding-left:10px;color:#545454;font:bold 22px/37px "Noto Sans",sans-serif}
.figure figcaption{margin:10px 0 0 15px;font:18px/28px "Noto Sans",sans-serif;letter-spacing:-.16px}
.shot{display:flex;margin:13px 0 0 122px;position:relative}
.ps{width:521px;margin-top:2px;border:1px solid #cfcfcf;border-bottom:0;background:#fff;color:#111}
.ps-title{height:22px;display:flex;align-items:center;gap:4px;padding-left:6px;font:10px "Open Sans",sans-serif;letter-spacing:-.35px}
.ps pre{height:240px;padding-top:1px;background:#162f51;color:#e8e8e8;font:8.770px/10.530px "Liberation Mono",monospace}
.ps em{font-style:normal;color:#f2ec45}.ps em.dim{color:#c9bd52}
.expand{position:absolute;left:522px;top:-3px;width:20px;height:20px}
.scrollbar{width:17px;height:1139px;background:#f1f1f1;display:flex;flex-direction:column;align-items:center;padding:8px 0 7px}
.scrollbar i{width:13px;height:549px;margin:246px 0 auto;background:#c1c1c1}
.rail{width:56px;background:#575757;display:flex;flex-direction:column;align-items:center;padding-top:13px;gap:21px;flex:none}
.rail svg{width:32px;height:32px;--face:#e8e8e8;--wave:#f0c419}
.az{font:bold 14px "Liberation Serif",serif;fill:#3a3010;letter-spacing:0}

/* taskbar */
.taskbar{height:40px;background:linear-gradient(90deg,#3f2013 0,#48290e 400px,#4a2a0d 800px,#3c2312 1150px,#5a4020 1500px,#54390f 1800px,#46280b 2300px,#46260c 2560px);display:flex;align-items:stretch;color:#fff}
.start{width:48px;display:flex;align-items:center;justify-content:center}
.search{width:344px;background:#744d38;border:1px solid #8f6c5a;display:flex;align-items:center;gap:11px;padding-left:11px;font-size:14.500px;letter-spacing:-.35px;color:#e6dcd7}
.search span{padding-top:1px}
.apps-row{display:flex;margin-left:3px;gap:1px}
.app{width:48px;display:flex;align-items:center;justify-content:center;position:relative}
.app svg{width:24px;height:24px}
.open::after{content:"";position:absolute;left:4px;right:4px;bottom:0;height:2px;background:#f3b692}
.current{background:#8b3c10}
.current::after{left:0;right:0}
.tray{margin-left:auto;display:flex;align-items:center}
.spk{margin-left:10px}
.clock{display:flex;flex-direction:column;align-items:center;width:52px;margin-left:9px;line-height:18px;font-size:12px;letter-spacing:-.5px}
.note{margin-left:20px;margin-right:18px}
.peek{width:1px;height:40px;background:#9a8170;margin-right:4px}

/* windows on the desktop */
.window{position:absolute;background:#f0f0f0;color:#111}
.devmgr{left:79px;top:43px;width:780px;height:571px;border:1px solid #777;box-shadow:0 4px 14px rgba(0,0,0,.32);display:flex;flex-direction:column;overflow:hidden}
.win-title{height:28px;background:#fff;display:flex;align-items:center;color:#8f8f8f;padding-left:7px;gap:6px}
.win-btns{margin-left:auto;margin-right:13px}
.menu{height:24px;background:#fff;border-bottom:1px solid #b2b5bb;display:flex;align-items:center;gap:16.500px;padding-left:9px}
.wtools{background:#fff;height:22px}
.strip{height:8px;border-top:1px solid #d0d0d0}
.tree-wrap{height:463px;border:1px solid #696969;border-right-color:#ddd;border-bottom-color:#ddd;border-top-width:2px;background:#fff;display:flex;overflow:hidden}
.tree{flex:1;overflow:hidden}
.tree li{height:18px;display:flex;align-items:center;padding:0 0 2px 22px;color:#000}
.tree svg{width:16px;height:16px;margin:2px 5px 0 0}
.tree .c{width:10px;height:10px;margin:4px 6px 0 3px}
.tree .root{padding-left:2px}
.tree .root .c{margin-right:7px}
.tree .leaf{padding-left:60px}
.wscroll{width:16px;background:#f0f0f0;display:flex;flex-direction:column;align-items:center;padding:4px 0}
.wscroll svg{width:10px;height:8px}
.wscroll i{width:15px;height:368px;background:#cdcdcd;margin:4px 0 auto}
.status{flex:1;display:flex;justify-content:flex-end;border-top:1px solid #d7d7d7;margin-top:2px;padding:3px 2px 1px 0}
.status i{width:1px;background:#d2d2d2}
.status i:nth-child(2){margin-left:132px}.status i:nth-child(3){margin-left:84px}
.dialog{left:369px;top:665px;width:400px;height:455px;border:1px solid #a0a0a0;box-shadow:0 3px 14px rgba(0,0,0,.3);display:flex;flex-direction:column;font:11px/17px "Liberation Sans",sans-serif;letter-spacing:-.26px;color:#111}
.dlg-title{height:30px;background:#fff;color:#999;font:12px/30px "Open Sans",sans-serif;letter-spacing:-.31px;display:flex;align-items:center;justify-content:space-between;padding:0 9px 0 8px}
.dlg-tabs{display:flex;align-items:flex-end;height:27px;padding-left:8px;letter-spacing:-.1px}
.dlg-tabs span{height:18px;border:1px solid #d9d9d9;border-bottom:0;text-align:center;margin-right:-1px;line-height:18px}
.g{width:49px}.d{width:42px}.e{width:43px}
.dlg-tabs .on{width:48px;height:21px;background:#fff;position:relative;margin-bottom:-1px}
.panel{width:384px;height:359px;margin-left:6px;border:1px solid #dcdcdc;background:#fff;padding:0 11px 0 14px;display:flex;flex-direction:column}
.dev{display:flex;gap:15px;height:56px;padding:15px 0 0 2px}
.dev svg{margin-top:7px}
.panel label{display:block;height:20px;line-height:18px}
.select{width:357px;height:21px;border:1px solid #adadad;background:#e1e1e1;display:flex;align-items:center;justify-content:space-between;padding:0 4px 0 3px;margin-bottom:11px}
.list{width:357px;height:215px;border:1px solid #828790;display:flex;padding:1px 1px 1px 1px;overflow:hidden}
.list ul{flex:1;overflow:hidden;height:211px}
.list li{height:17px;padding-left:6px;line-height:19px}
.sel{background:#cce8ff}
.list .wscroll{height:211px;padding-top:5px;border-left:1px solid #e3f0fb}
.list .wscroll i{height:142px;margin-top:4px}
.dlg-btns{display:flex;justify-content:flex-end;gap:8px;padding:8px 7px 0 0}
.dlg-btns span{width:73px;height:21px;border:1px solid #adadad;background:#e1e1e1;text-align:center;line-height:20px;letter-spacing:0}
```
